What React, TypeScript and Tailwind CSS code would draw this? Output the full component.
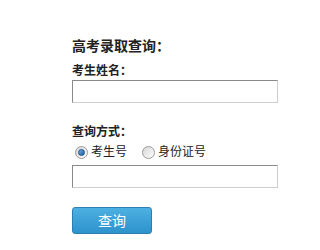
import React from "react";

function Radio({ checked }: { checked: boolean }) {
  return (
    <span className="relative inline-flex h-[13px] w-[13px] items-center justify-center rounded-full border border-[#9a9a9a] bg-gradient-to-br from-[#d6d6d6] to-[#ffffff]">
      {checked && (
        <span className="h-[7px] w-[7px] rounded-full bg-gradient-to-br from-[#6fb3e6] to-[#1a5c9a] border border-[#174f85]" />
      )}
    </span>
  );
}

export default function App() {
  return (
    <div
      className="min-h-[250px] w-[303px] bg-white pl-[72px] pt-[36px] text-[#222]"
      style={{ fontFamily: '"Liberation Sans", "Noto Sans CJK SC", sans-serif' }}
    >
      <div className="text-[14px] font-bold leading-[20px]">高考录取查询：</div>
      <div className="mt-[6px] text-[12px] font-bold leading-[18px]">考生姓名：</div>
      <div className="h-[23px] w-[206px] border border-t-[#8a8a8a] border-l-[#8a8a8a] border-r-[#cfcfcf] border-b-[#cfcfcf] bg-white" />
      <div className="mt-[20px] text-[12px] font-bold leading-[18px]">查询方式：</div>
      <div className="mt-[1px] flex h-[20px] items-center text-[12px] leading-[20px]">
        <span className="ml-[3px] flex items-center">
          <Radio checked />
          <span className="ml-[3px]">考生号</span>
        </span>
        <span className="ml-[15px] flex items-center">
          <Radio checked={false} />
          <span className="ml-[3px]">身份证号</span>
        </span>
      </div>
      <div className="mt-[3px] h-[23px] w-[206px] border border-t-[#8a8a8a] border-l-[#8a8a8a] border-r-[#cfcfcf] border-b-[#cfcfcf] bg-white" />
      <button className="mt-[19px] flex h-[27px] w-[80px] items-center justify-center rounded-[3px] border border-[#2b7fb3] bg-gradient-to-b from-[#4cb0e2] to-[#2d93cc] text-[14px] leading-[20px] text-white">
        查询
      </button>
    </div>
  );
}
